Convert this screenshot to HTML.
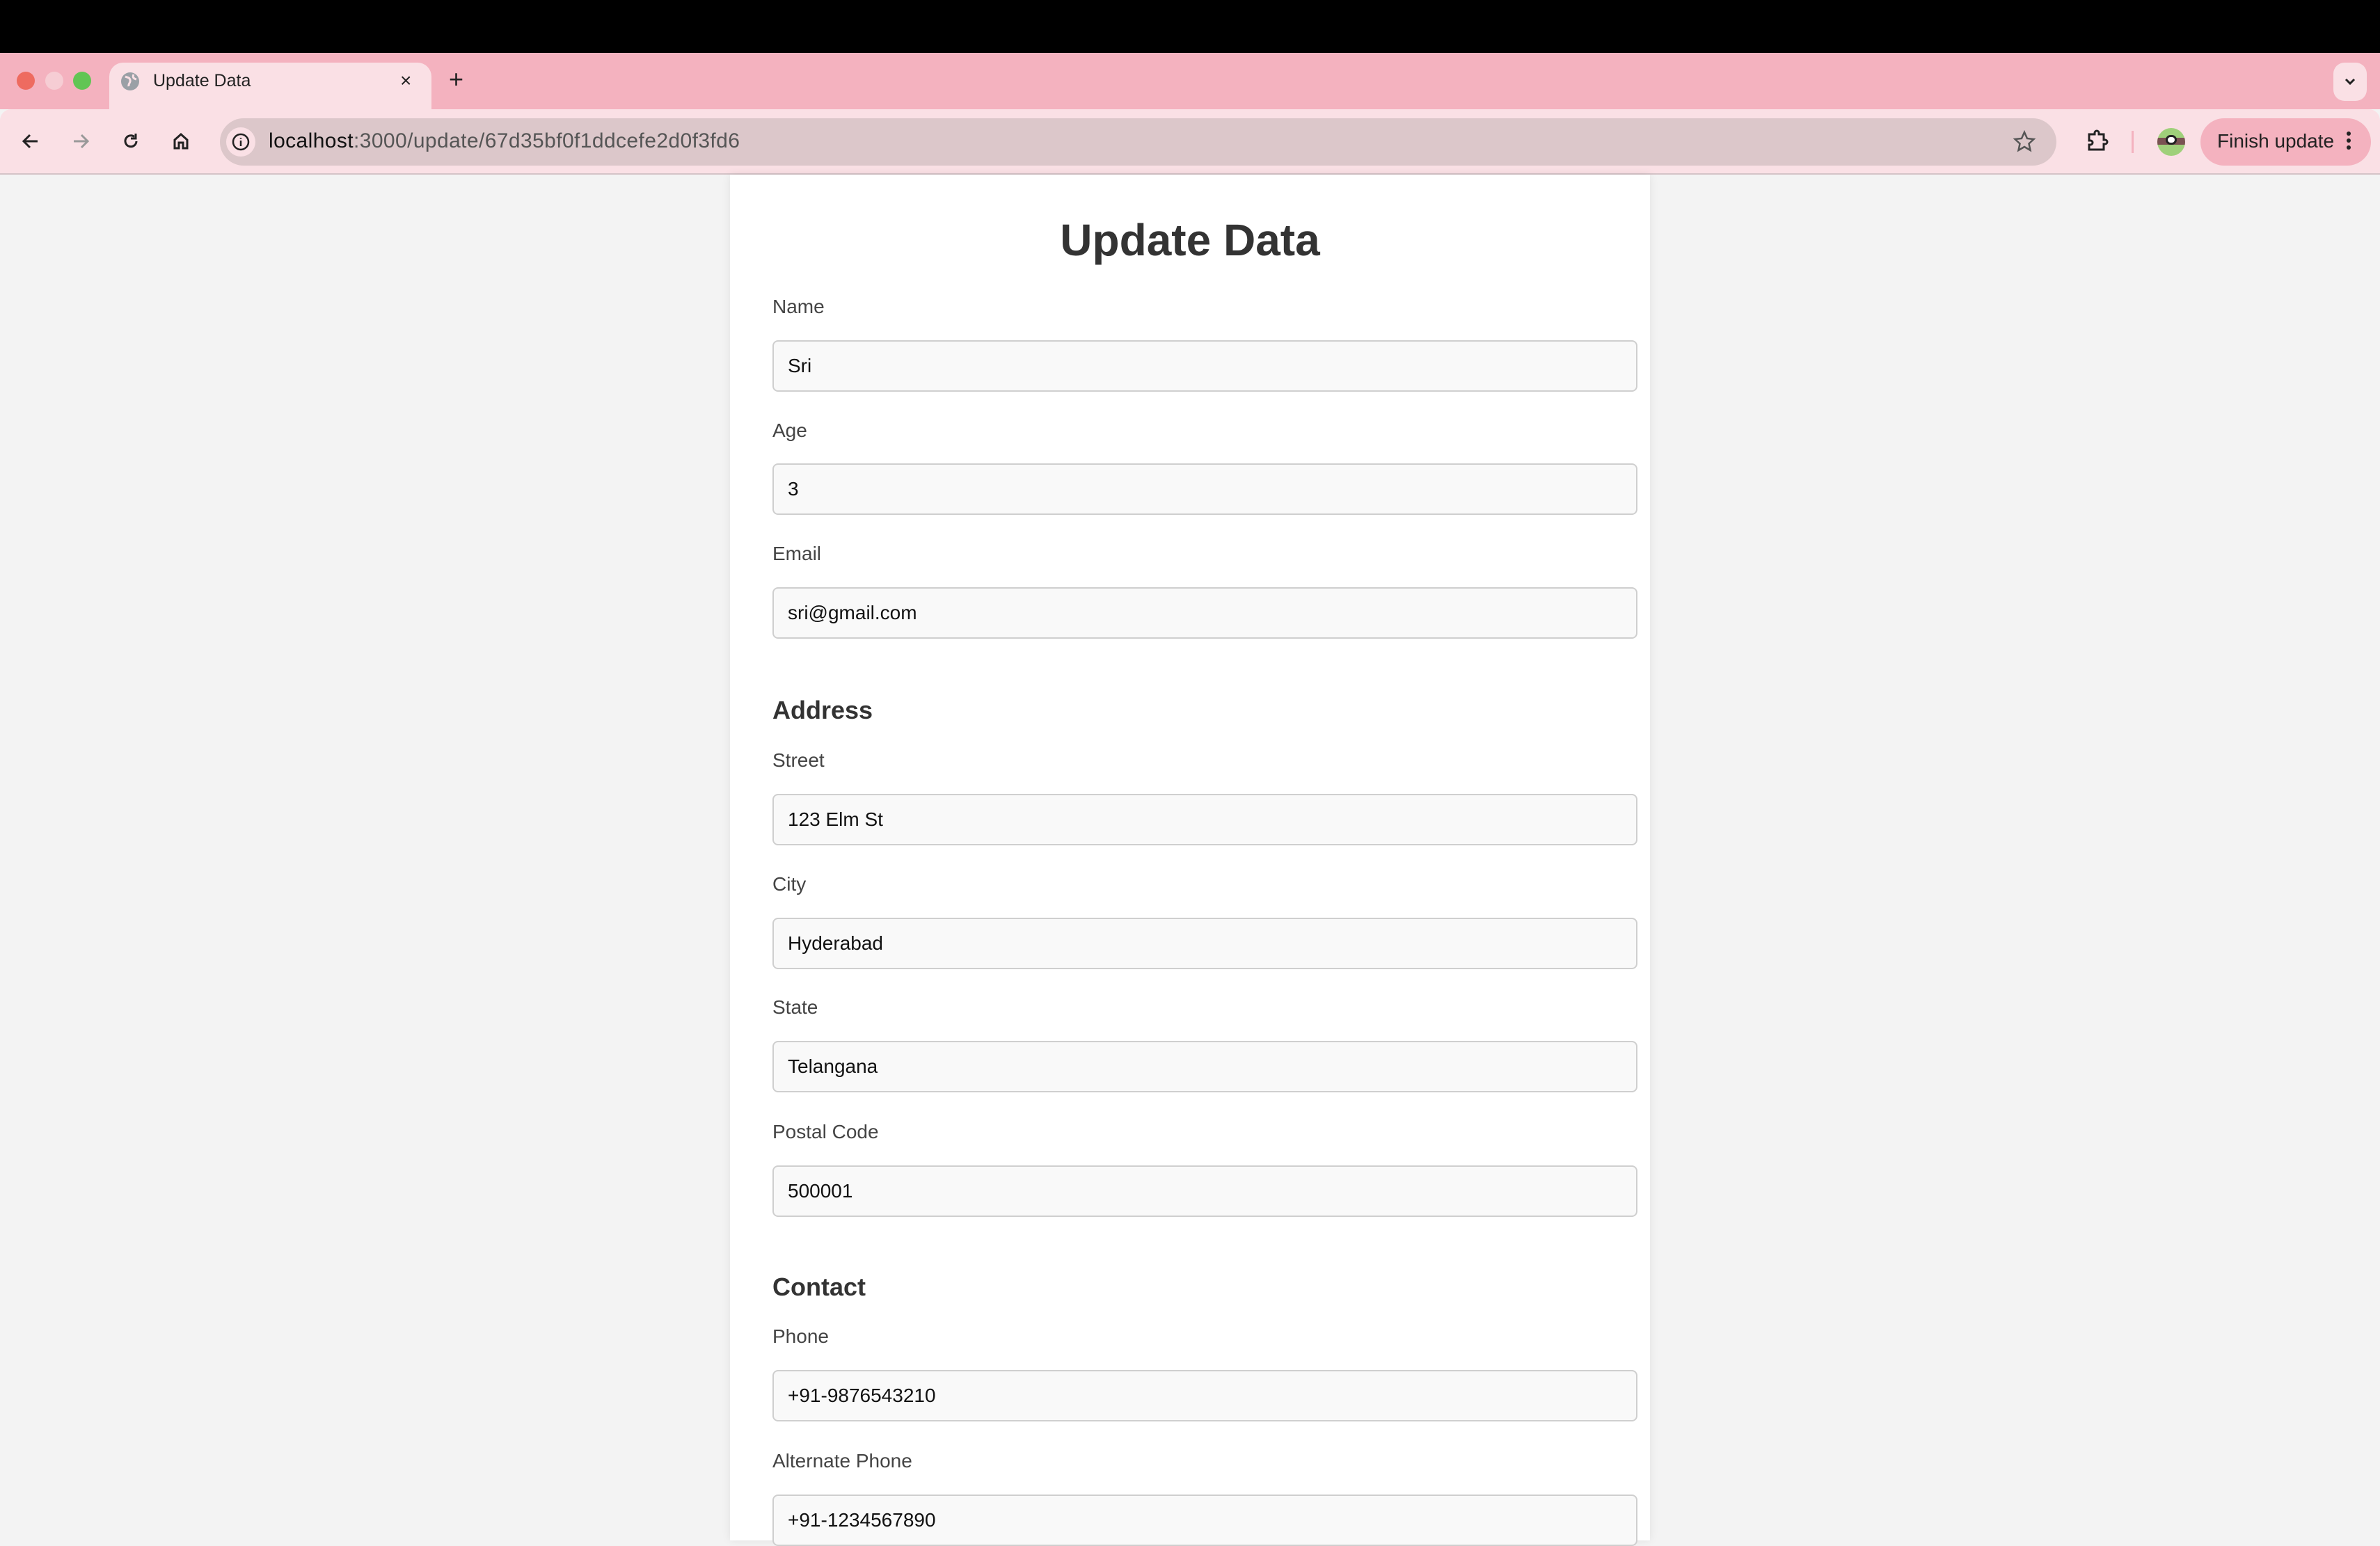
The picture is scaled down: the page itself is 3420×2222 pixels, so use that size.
<!DOCTYPE html>
<html><head><meta charset="utf-8"><style>
*{box-sizing:border-box;margin:0;padding:0}
body{width:3420px;height:2214px;overflow:hidden;background:#f3f3f3;font-family:"Liberation Sans",Arial,sans-serif;position:relative}
.a{position:absolute}
.lbl{position:absolute;left:1110px;font-size:28px;color:#444;line-height:40px;height:40px}
.inp{position:absolute;left:1110px;width:1243px;height:74px;border:2px solid #cfcfcf;border-radius:8px;background:#f9f9f9;font-size:28px;color:#111;line-height:70px;padding-left:20px}
.h3{position:absolute;left:1110px;font-size:36px;font-weight:bold;color:#333;line-height:44px}
.ic{position:absolute}
</style></head><body>
<div class="a" style="left:0;top:0;width:3420px;height:76px;background:#000"></div>
<div class="a" style="left:0;top:76px;width:3420px;height:81px;background:#f4b2bf"></div>
<div class="a" style="left:24px;top:103px;width:26px;height:26px;border-radius:50%;background:#ee6b60"></div>
<div class="a" style="left:65px;top:103px;width:26px;height:26px;border-radius:50%;background:#f6cdd4"></div>
<div class="a" style="left:105px;top:103px;width:26px;height:26px;border-radius:50%;background:#62c554"></div>
<div class="a" style="left:157px;top:90px;width:463px;height:70px;background:#fae0e5;border-radius:20px 20px 0 0"></div>
<svg class="ic" style="left:172px;top:102px" width="30" height="30" viewBox="0 0 30 30"><circle cx="15" cy="15" r="13" fill="#9aa0a6"/><path d="M8 8c4 2 6 1 7 5s-3 5-2 9M20 5c-2 4 0 6 4 7" stroke="#fae0e5" stroke-width="3" fill="none"/></svg>
<div class="a" style="left:220px;top:101px;font-size:25px;color:#222;line-height:30px">Update Data</div>
<div class="a" style="left:575px;top:99px;font-size:28px;color:#222;line-height:34px">×</div>
<div class="a" style="left:645px;top:94px;font-size:36px;color:#222;line-height:40px">+</div>
<div class="a" style="left:3353px;top:90px;width:48px;height:55px;border-radius:16px;background:#fae0e5"></div>
<svg class="ic" style="left:3366px;top:106px" width="22" height="22" viewBox="0 0 22 22"><path d="M5 8l6 6 6-6" stroke="#222" stroke-width="3" fill="none"/></svg>
<div class="a" style="left:0;top:157px;width:3420px;height:93px;background:#fae0e5;border-radius:16px 16px 0 0"></div>
<div class="a" style="left:0;top:249px;width:3420px;height:2px;background:#d4c3c7"></div>
<svg class="ic" style="left:24px;top:183px" width="40" height="40" viewBox="0 0 40 40"><path d="M30 20H10M19 11l-9 9 9 9" stroke="#222" stroke-width="3" fill="none"/></svg>
<svg class="ic" style="left:96px;top:183px" width="40" height="40" viewBox="0 0 40 40"><path d="M10 20h20M21 11l9 9-9 9" stroke="#999" stroke-width="3" fill="none"/></svg>
<svg class="ic" style="left:168px;top:183px" width="40" height="40" viewBox="0 0 40 40"><path d="M28 20a8 8 0 1 1-3-6.5" stroke="#222" stroke-width="3" fill="none"/><path d="M27 9v7h-7" stroke="#222" stroke-width="3" fill="none"/></svg>
<svg class="ic" style="left:240px;top:183px" width="40" height="40" viewBox="0 0 40 40"><path d="M11 18l9-8 9 8v12h-6v-8h-6v8h-6z" stroke="#222" stroke-width="3" fill="none"/></svg>
<div class="a" style="left:316px;top:170px;width:2639px;height:68px;border-radius:34px;background:#dcc7ca"></div>
<div class="a" style="left:325px;top:183px;width:42px;height:42px;border-radius:50%;background:#fae0e5"></div>
<svg class="ic" style="left:332px;top:190px" width="28" height="28" viewBox="0 0 28 28"><circle cx="14" cy="14" r="11" stroke="#222" stroke-width="2.5" fill="none"/><path d="M14 12v8M14 8v1.5" stroke="#222" stroke-width="2.5"/></svg>
<div class="a" style="left:386px;top:185px;font-size:30px;letter-spacing:0.4px;line-height:36px;color:#555"><span style="color:#111">localhost</span>:3000/update/67d35bf0f1ddcefe2d0f3fd6</div>
<svg class="ic" style="left:2890px;top:184px" width="38" height="38" viewBox="0 0 38 38"><path d="M19 6l4 9 9.5 1-7 6.5 2 9.5L19 27l-8.5 5 2-9.5-7-6.5 9.5-1z" stroke="#555" stroke-width="2.5" fill="none"/></svg>
<svg class="ic" style="left:2994px;top:184px" width="38" height="38" viewBox="0 0 38 38"><path d="M8 9h8v-2a3 3 0 0 1 6 0v2h7v8h2a3 3 0 0 1 0 6h-2v8H8v-7h2a3 3 0 0 0 0-6H8z" stroke="#222" stroke-width="3" fill="none"/></svg>
<div class="a" style="left:3063px;top:188px;width:3px;height:32px;background:#f4b2bf"></div>
<div class="a" style="left:3100px;top:184px;width:40px;height:40px;border-radius:50%;background:#9fd07a;overflow:hidden"><div style="margin-top:14px;height:10px;background:#7a5252"></div><div style="position:absolute;left:12px;top:10px;width:16px;height:14px;border-radius:7px;background:#fff;border:3px solid #222"></div></div>
<div class="a" style="left:3162px;top:170px;width:245px;height:68px;border-radius:34px;background:#f4b2bf"></div>
<div class="a" style="left:3186px;top:186px;font-size:28px;line-height:34px;color:#222">Finish update</div>
<div class="a" style="left:3372px;top:189px;width:6px;height:6px;border-radius:50%;background:#222;box-shadow:0 10px 0 #222,0 20px 0 #222"></div>

<div class="a" style="left:1049px;top:251px;width:1322px;height:1963px;background:#fff;box-shadow:0 0 12px rgba(0,0,0,0.08)"></div>
<div class="a" style="left:1049px;top:307px;width:1322px;text-align:center;font-size:64px;font-weight:bold;color:#333;line-height:76px">Update Data</div>

<div class="lbl" style="top:421px">Name</div>
<div class="inp" style="top:489px">Sri</div>
<div class="lbl" style="top:599px">Age</div>
<div class="inp" style="top:666px">3</div>
<div class="lbl" style="top:776px">Email</div>
<div class="inp" style="top:844px">sri@gmail.com</div>
<div class="h3" style="top:999px">Address</div>
<div class="lbl" style="top:1073px">Street</div>
<div class="inp" style="top:1141px">123 Elm St</div>
<div class="lbl" style="top:1251px">City</div>
<div class="inp" style="top:1319px">Hyderabad</div>
<div class="lbl" style="top:1428px">State</div>
<div class="inp" style="top:1496px">Telangana</div>
<div class="lbl" style="top:1607px">Postal Code</div>
<div class="inp" style="top:1675px">500001</div>
<div class="h3" style="top:1828px">Contact</div>
<div class="lbl" style="top:1901px">Phone</div>
<div class="inp" style="top:1969px">+91-9876543210</div>
<div class="lbl" style="top:2080px">Alternate Phone</div>
<div class="inp" style="top:2148px">+91-1234567890</div>
</body></html>
